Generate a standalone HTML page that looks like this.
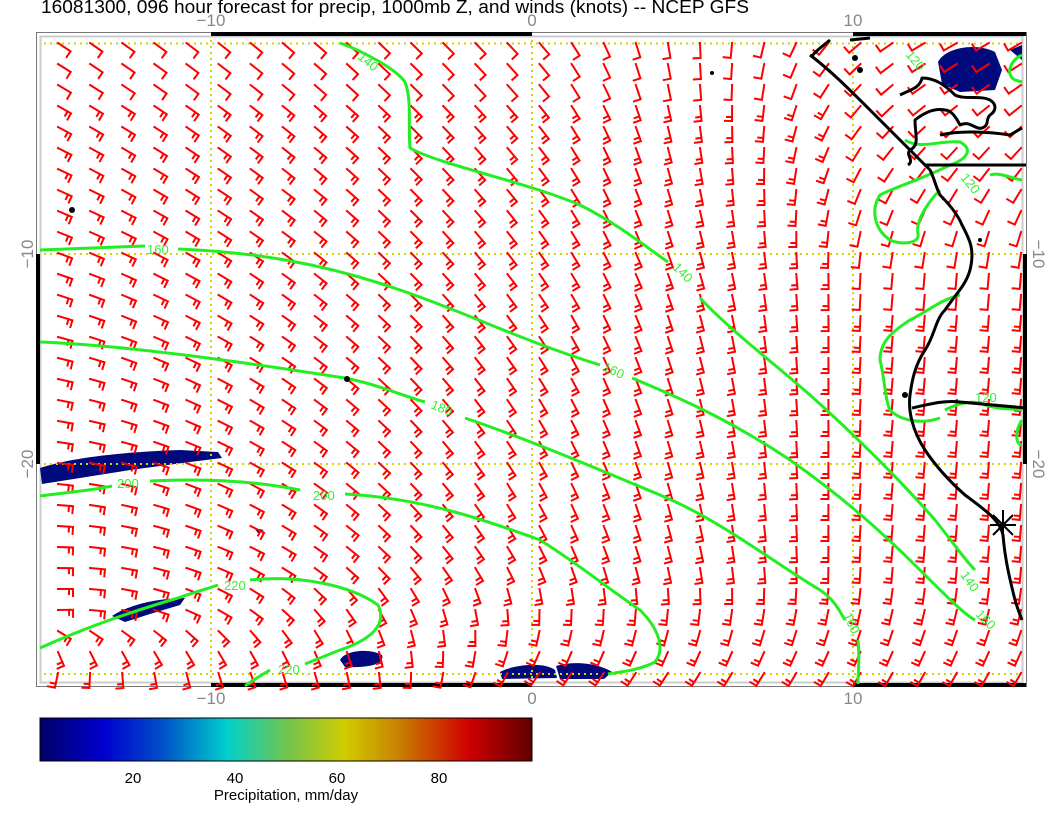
<!DOCTYPE html>
<html><head><meta charset="utf-8">
<style>
html,body{margin:0;padding:0;background:#fff;width:1056px;height:816px;overflow:hidden}
svg{position:absolute;left:0;top:0}
text{font-family:"Liberation Sans",sans-serif}
</style></head><body>
<svg id="s" width="1056" height="816" viewBox="0 0 1056 816" xmlns="http://www.w3.org/2000/svg">
<defs>
<linearGradient id="cb" x1="0" x2="1" y1="0" y2="0">
<stop offset="0" stop-color="#000068"/>
<stop offset="0.13" stop-color="#0000d0"/>
<stop offset="0.25" stop-color="#0050c8"/>
<stop offset="0.38" stop-color="#00d0cc"/>
<stop offset="0.5" stop-color="#70c450"/>
<stop offset="0.62" stop-color="#d0cc00"/>
<stop offset="0.73" stop-color="#c88000"/>
<stop offset="0.87" stop-color="#d00000"/>
<stop offset="1" stop-color="#600000"/>
</linearGradient>
</defs>
<text x="41" y="13" font-size="18" fill="#000" textLength="708" lengthAdjust="spacingAndGlyphs">16081300, 096 hour forecast for precip, 1000mb Z, and winds (knots) -- NCEP GFS</text>
<!-- frame -->
<rect x="36.5" y="32.5" width="990" height="654" fill="none" stroke="#777" stroke-width="1"/>
<rect x="40.5" y="36.5" width="982" height="646" fill="none" stroke="#ccc" stroke-width="2"/>
<g fill="#000">
<rect x="211" y="32" width="321" height="4"/>
<rect x="853" y="32" width="173" height="4"/>
<rect x="211" y="683" width="321" height="4"/>
<rect x="853" y="683" width="173" height="4"/>
<rect x="36" y="254" width="4" height="210"/>
<rect x="1023" y="254" width="4" height="210"/>
</g>
<g fill="#888" font-size="17" text-anchor="middle">
<text x="211" y="26">−10</text><text x="532" y="26">0</text><text x="853" y="26">10</text>
<text x="211" y="704">−10</text><text x="532" y="704">0</text><text x="853" y="704">10</text>
<text transform="translate(33,254) rotate(-90)">−10</text>
<text transform="translate(33,464) rotate(-90)">−20</text>
<text transform="translate(1033,254) rotate(90)">−10</text>
<text transform="translate(1033,464) rotate(90)">−20</text>
</g>
<!-- precip -->
<g fill="#000a7c">
<path d="M40,468 C70,458 120,452 180,450 L218,452 L222,458 L190,462 L130,470 L80,478 L42,484 Z"/>
<path d="M112,616 C130,604 160,598 185,598 L180,605 L150,614 L125,622 Z"/>
<path d="M340,660 C345,650 370,648 382,655 C385,664 370,668 345,667 Z"/>
<path d="M500,672 C515,664 545,662 555,670 L557,678 L502,679 Z"/>
<path d="M556,666 C575,660 600,664 612,672 L604,679 L560,679 Z"/>
<path d="M938,62 C945,48 975,42 995,52 L1002,70 L995,90 L960,92 L942,84 Z"/>
<path d="M1010,50 L1022,45 L1022,60 Z"/>
<path d="M254,528 L264,530 L258,533 Z"/>
</g>
<!-- grid -->
<g stroke="#d4d400" stroke-width="2" stroke-dasharray="2,4" fill="none">
<line x1="44" y1="43.5" x2="1020" y2="43.5"/>
<line x1="44" y1="254" x2="1020" y2="254"/>
<line x1="44" y1="464" x2="1020" y2="464"/>
<line x1="44" y1="674" x2="1020" y2="674"/>
<line x1="211" y1="40" x2="211" y2="680"/>
<line x1="532" y1="40" x2="532" y2="680"/>
<line x1="853" y1="40" x2="853" y2="680"/>
</g>
<g id="barbs" stroke="#ff0000" stroke-width="2" fill="none" stroke-linecap="square"></g>
<!-- contours -->
<g stroke="#22ee22" stroke-width="3" fill="none" stroke-linejoin="round">
<path d="M340,43 C360,50 395,68 405,82 C412,100 408,125 410,148 C440,165 520,180 580,205 C620,225 650,250 668,262 M700,298 C730,330 770,360 810,395 C860,440 900,480 935,520 C955,545 965,560 975,570"/>
<path d="M40,250 L145,246 M178,249 C250,252 320,262 400,290 C460,310 520,340 600,365 M632,378 C680,398 730,420 790,460 C840,495 880,530 920,570 C945,595 965,615 975,620"/>
<path d="M40,342 C120,345 230,360 345,378 C380,385 400,395 425,402 M465,418 C530,440 600,470 660,495 C720,520 770,560 820,590 C835,600 840,612 845,620"/>
<path d="M858,640 C860,660 858,670 858,684"/>
<path d="M40,496 C70,492 95,490 112,486 M150,481 C210,478 260,482 300,490 M345,494 C420,498 480,518 540,540 C580,565 610,590 640,610 C660,630 665,650 655,662 C640,670 620,672 608,674"/>
<path d="M40,648 C80,630 130,612 178,598 C195,592 210,588 218,585 M250,580 C300,575 350,585 378,605 C388,625 370,640 340,650 C320,658 310,662 305,664 M270,670 C260,676 250,682 245,686"/>
<path d="M905,140 C920,150 940,140 960,142 C975,150 965,160 950,165 C920,180 900,185 880,195 C870,210 875,230 890,240 C900,245 920,244 918,234 C915,220 930,200 940,190"/>
<path d="M1022,55 C1010,60 1005,75 1015,80 L1022,82"/>
<path d="M960,295 C940,300 930,310 910,320 C895,330 880,340 880,360 C885,380 885,400 890,410 C900,420 920,425 940,418"/>
<path d="M945,410 C960,402 975,400 985,405 C1000,410 1010,408 1022,410"/>
<path d="M1022,420 C1015,430 1015,445 1022,445"/>
<path d="M1022,180 C1010,178 1000,172 990,175"/>
</g>
<g fill="#33ee33" font-size="13">
<text transform="translate(357,58) rotate(40)">140</text>
<text transform="translate(672,268) rotate(45)">140</text>
<text x="147" y="254">160</text>
<text transform="translate(602,370) rotate(25)">160</text>
<text transform="translate(430,408) rotate(22)">180</text>
<text x="117" y="488">200</text>
<text x="313" y="500">200</text>
<text x="224" y="590">220</text>
<text x="278" y="674">220</text>
<text transform="translate(960,178) rotate(50)">120</text>
<text transform="translate(905,55) rotate(50)">120</text>
<text x="975" y="402">120</text>
<text transform="translate(960,575) rotate(55)">140</text>
<text transform="translate(975,615) rotate(45)">160</text>
<text transform="translate(843,615) rotate(65)">160</text>
</g>
<!-- coastline -->
<g stroke="#000" stroke-width="3" fill="none" stroke-linejoin="round">
<path d="M810,55 C830,70 850,90 870,110 C890,130 910,150 930,170 C935,180 935,185 940,195 C950,205 958,215 962,225 C970,240 975,250 970,270 C966,285 955,295 945,310 C935,320 935,335 925,350 C915,365 912,380 910,395 C908,410 912,430 925,450 C935,465 948,480 965,495 C985,510 1000,520 1003,535 C1005,560 1010,580 1015,600 C1018,610 1020,615 1022,620"/>
<path d="M850,40 L870,38 M830,40 C820,48 815,52 812,56"/>
<path d="M900,95 C910,90 920,88 922,78 C935,78 945,85 955,95 C965,100 980,95 990,100 C998,105 995,112 990,115 C985,120 990,125 982,128 C975,130 970,120 960,125 C955,115 950,110 945,110 C935,108 925,112 915,120 C915,135 920,145 910,150 C905,155 915,160 908,165"/>
<path d="M925,165 L1026,165"/>
<path d="M940,135 C960,130 990,132 1010,135 L1022,128"/>
<path d="M912,408 C930,404 945,400 960,402 L1026,408"/>
</g>
<g fill="#000">
<circle cx="72" cy="210" r="3"/><circle cx="347" cy="379" r="3"/>
<circle cx="855" cy="58" r="3"/><circle cx="860" cy="70" r="3"/><circle cx="712" cy="73" r="2"/>
<circle cx="905" cy="395" r="3"/><circle cx="980" cy="240" r="2"/>
</g>
<g stroke="#000" stroke-width="2">
<line x1="990" y1="525" x2="1016" y2="525"/><line x1="1003" y1="510" x2="1003" y2="540"/>
<line x1="993" y1="515" x2="1013" y2="535"/><line x1="993" y1="535" x2="1013" y2="515"/>
</g>
<!-- colorbar -->
<rect x="40" y="718" width="492" height="43" fill="url(#cb)" stroke="#000" stroke-width="1"/>
<g font-size="15" fill="#000" text-anchor="middle">
<text x="133" y="783">20</text><text x="235" y="783">40</text><text x="337" y="783">60</text><text x="439" y="783">80</text>
<text x="286" y="800">Precipitation, mm/day</text>
</g>
</svg>
<script>
(function(){
var g=document.getElementById('barbs'),out='';
function lerp(a,b,t){return a+(b-a)*t;}
for(var r=0;r<31;r++){for(var c=0;c<31;c++){
 var x=58+c*32.1,y=43+r*21.0;
 var u=(x-38)/988,v=(y-43)/631;
 var L=33-42*v;
 var M=48+18*v; if(v>0.82){M=lerp(M,125,(v-0.82)/0.18);}
 var R=v<0.35?lerp(130,95,v/0.35):95;
 if(v>0.85)R=lerp(95,120,(v-0.85)/0.15);
 var a;
 if(u<0.5)a=lerp(L,M,u/0.5);else a=lerp(M,R,Math.min(1,(u-0.5)/0.35));
 if(u>0.75&&v<0.35){a=lerp(a,150,Math.min(1,(u-0.75)/0.15)*(1-v/0.35));}
 if(v>0.9&&u<0.35){a=lerp(a,110,(v-0.9)/0.1*(1-u/0.35));}
 var rad=a*Math.PI/180,dx=Math.cos(rad),dy=Math.sin(rad),len=15,fl=7;
 var ex=x+dx*len,ey=y+dy*len,fx=-dy,fy=dx;
 var d='M'+x.toFixed(1)+','+y.toFixed(1)+'L'+ex.toFixed(1)+','+ey.toFixed(1)+'l'+(fx*fl).toFixed(1)+','+(fy*fl).toFixed(1);
 if(v>0.08&&!(u>0.8&&v<0.4)){var bx=ex-dx*4,by=ey-dy*4;d+='M'+bx.toFixed(1)+','+by.toFixed(1)+'l'+(fx*5).toFixed(1)+','+(fy*5).toFixed(1);}
 out+='<path d="'+d+'"/>';
}}
g.innerHTML=out;
})();
</script>
</body></html>
